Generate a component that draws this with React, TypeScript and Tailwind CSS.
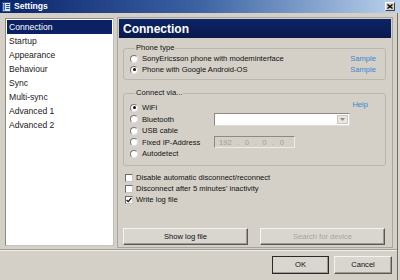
import { ReactNode } from "react";


// classic win32 "Settings" dialog

const nav = ["Connection", "Startup", "Appearance", "Behaviour", "Sync", "Multi-sync", "Advanced 1", "Advanced 2"];


function Radio({ checked = false }: { checked?: boolean }) {
    return (
        <span className="w-[8px] h-[8px] rounded-full bg-white border border-t-[#7a7873] border-l-[#7a7873] border-r-[#e4e2dd] border-b-[#e4e2dd] flex items-center justify-center shrink-0">
            {checked && <span className="w-[3px] h-[3px] rounded-full bg-[#111]" />}
        </span>
    );
}


function Check({ checked = false }: { checked?: boolean }) {
    return (
        <span className="w-[8px] h-[8px] bg-white border border-t-[#6e6c68] border-l-[#6e6c68] border-r-[#c9c6bf] border-b-[#c9c6bf] flex items-center justify-center shrink-0">
            {checked && (
                <svg width="6" height="6" viewBox="0 0 6 6">
                    <path d="M0.6 3 L2.2 4.6 L5.4 1" stroke="#111" strokeWidth="1.3" fill="none" />
                </svg>
            )}
        </span>
    );
}


function Button({ children, disabled = false, primary = false, className = "" }: { children: ReactNode; disabled?: boolean; primary?: boolean; className?: string }) {
    return (
        <div className={`h-full flex items-center justify-center bg-[#d9d6d0] border ${primary ? "border-[#2a2a2a]" : "border-t-[#f4f3f0] border-l-[#f4f3f0] border-r-[#5a5955] border-b-[#5a5955]"} shadow-[inset_-1px_-1px_0_#9c9a94] text-[7.6px] ${disabled ? "text-[#a7a49e]" : "text-[#111]"} ${className}`}>
            {children}
        </div>
    );
}


function Group({ label, children, className = "" }: { label: string; children: ReactNode; className?: string }) {
    return (
        <fieldset className={`border border-[#b9b6ae] rounded-[3px] ${className}`}>
            <legend className="ml-[5px] px-[1px] leading-[10px] text-[7.6px] text-[#111]">{label}</legend>
            {children}
        </fieldset>
    );
}


function RadioRow({ label, checked = false, children }: { label: string; checked?: boolean; children?: ReactNode }) {
    return (
        <div className="h-[11.5px] flex items-center">
            <div className="w-[84px] flex items-center gap-[4px]">
                <Radio checked={checked} />
                <span>{label}</span>
            </div>
            {children}
        </div>
    );
}


export default function App() {


    return (

        <div className="w-[400px] h-[280px] bg-[#d4d0c8] flex flex-col overflow-hidden" style={{ fontFamily: '"Liberation Sans", Arial, sans-serif' }}>


            {/* Title bar */}
            <div className="h-[13px] shrink-0 flex items-center bg-gradient-to-r from-[#0a246a] via-[#3d63a3] to-[#bcd3ec]">
                <svg width="9" height="10" viewBox="0 0 9 10" className="ml-[2px]">
                    <rect x="0.5" y="0.5" width="8" height="9" fill="#dfe8f5" stroke="#2c4f8f" />
                    <rect x="1.5" y="1.5" width="1.5" height="7" fill="#3a6cc0" />
                    <line x1="4" y1="2.5" x2="7.5" y2="2.5" stroke="#2c4f8f" />
                    <line x1="4" y1="4.5" x2="7.5" y2="4.5" stroke="#2c4f8f" />
                    <line x1="4" y1="6.5" x2="7.5" y2="6.5" stroke="#2c4f8f" />
                </svg>
                <span className="ml-[3px] text-[8.6px] font-bold text-white leading-none">Settings</span>
                <div className="ml-auto mr-[5px] w-[10px] h-[9px] bg-[#d4d0c8] border border-t-white border-l-white border-r-[#404040] border-b-[#404040] flex items-center justify-center">
                    <svg width="6" height="5" viewBox="0 0 6 5">
                        <path d="M0.5 0.5 L5.5 4.5 M5.5 0.5 L0.5 4.5" stroke="#000" strokeWidth="1.3" />
                    </svg>
                </div>
            </div>


            <div className="flex flex-1">

                <div className="w-[397px] flex flex-col">


                    {/* Main row */}
                    <div className="flex items-start gap-[3px] pl-[5px] pt-[4px]">


                        {/* Nav list */}
                        <div className="mt-[1px] w-[109px] h-[228px] bg-white border border-t-[#8d8a84] border-l-[#8d8a84] border-r-[#c4c1ba] border-b-[#c4c1ba] p-[1px]">
                            {nav.map((item, i) => (
                                <div
                                    key={item}
                                    className={`h-[14px] pl-[2px] flex items-center text-[8.6px] ${i === 0 ? "bg-[#0b2163] text-white" : "text-[#1a1a1a]"}`}
                                >
                                    {item}
                                </div>
                            ))}
                        </div>


                        {/* Settings panel */}
                        <div className="w-[276px] h-[231px] border border-[#a9a69e] p-[1px] flex flex-col text-[7.6px] text-[#111]">


                            <div className="h-[19px] shrink-0 flex items-center pl-[4px] bg-gradient-to-b from-[#0d2566] to-[#08194d]">
                                <span className="text-[12px] font-bold text-white">Connection</span>
                            </div>


                            <div className="flex-1 flex flex-col pl-[4px] pr-[5px] pb-[1px]">


                                {/* Phone type */}
                                <Group label="Phone type" className="mt-[5px] pl-[6px] pr-[9px] pb-[4px]">
                                    <div className="h-[11px] flex items-center gap-[4px]">
                                        <Radio />
                                        <span>SonyEricsson phone with modeminterface</span>
                                        <span className="ml-auto text-[#3a86d4]">Sample</span>
                                    </div>
                                    <div className="h-[11px] flex items-center gap-[4px]">
                                        <Radio checked />
                                        <span>Phone with Google Android-OS</span>
                                        <span className="ml-auto text-[#3a86d4]">Sample</span>
                                    </div>
                                </Group>


                                {/* Connect via */}
                                <Group label="Connect via..." className="mt-[8px] pl-[6px] pr-[17px] pt-[4px] pb-[5px]">
                                    <RadioRow label="WiFi" checked>
                                        <span className="ml-auto self-start -mt-[3px] text-[#3a86d4]">Help</span>
                                    </RadioRow>
                                    <RadioRow label="Bluetooth">
                                        <div className="w-[136px] h-[13px] bg-white border border-t-[#8d8a84] border-l-[#8d8a84] border-r-[#dedbd5] border-b-[#dedbd5] flex justify-end p-[1px]">
                                            <div className="w-[11px] bg-[#e8e6e2] border border-[#c9c6c0] flex items-center justify-center">
                                                <svg width="5" height="3" viewBox="0 0 5 3">
                                                    <path d="M0 0 H5 L2.5 3 Z" fill="#8f8d88" />
                                                </svg>
                                            </div>
                                        </div>
                                    </RadioRow>
                                    <RadioRow label="USB cable" />
                                    <RadioRow label="Fixed IP-Address">
                                        <div className="w-[81px] h-[12px] bg-[#d4d0c8] border border-t-[#8d8a84] border-l-[#8d8a84] border-r-[#eeece8] border-b-[#eeece8] flex items-center justify-between pl-[4px] pr-[10px] text-[#a09d97]">
                                            <span>192</span>
                                            <span>.</span>
                                            <span>0</span>
                                            <span>.</span>
                                            <span>0</span>
                                            <span>.</span>
                                            <span>0</span>
                                        </div>
                                    </RadioRow>
                                    <RadioRow label="Autodetect" />
                                </Group>


                                {/* Options */}
                                <div className="mt-[7px] pl-[2px]">
                                    {["Disable automatic disconnect/reconnect", "Disconnect after 5 minutes' inactivity", "Write log file"].map((label, i) => (
                                        <div key={label} className="h-[11px] flex items-center gap-[3px]">
                                            <Check checked={i === 2} />
                                            <span>{label}</span>
                                        </div>
                                    ))}
                                </div>


                                <div className="mt-auto h-[17px] flex gap-[12px]">
                                    <Button className="w-[125px]">Show log file</Button>
                                    <Button className="w-[125px]" disabled>Search for device</Button>
                                </div>

                            </div>

                        </div>

                    </div>


                    {/* Separator */}
                    <div className="mt-[1px] h-[2px] border-t border-[#a19e97] border-b border-b-[#f2f0ec]" />


                    {/* Dialog buttons */}
                    <div className="mt-[5px] h-[18px] flex justify-end gap-[5px] pr-[5px]">
                        <Button className="w-[57px]" primary>OK</Button>
                        <Button className="w-[58px]">Cancel</Button>
                    </div>

                </div>


                {/* Window edge */}
                <div className="w-[3px] border-l border-[#6f6d68] bg-[#d9d6d0]" />

            </div>

        </div>

    );

}
